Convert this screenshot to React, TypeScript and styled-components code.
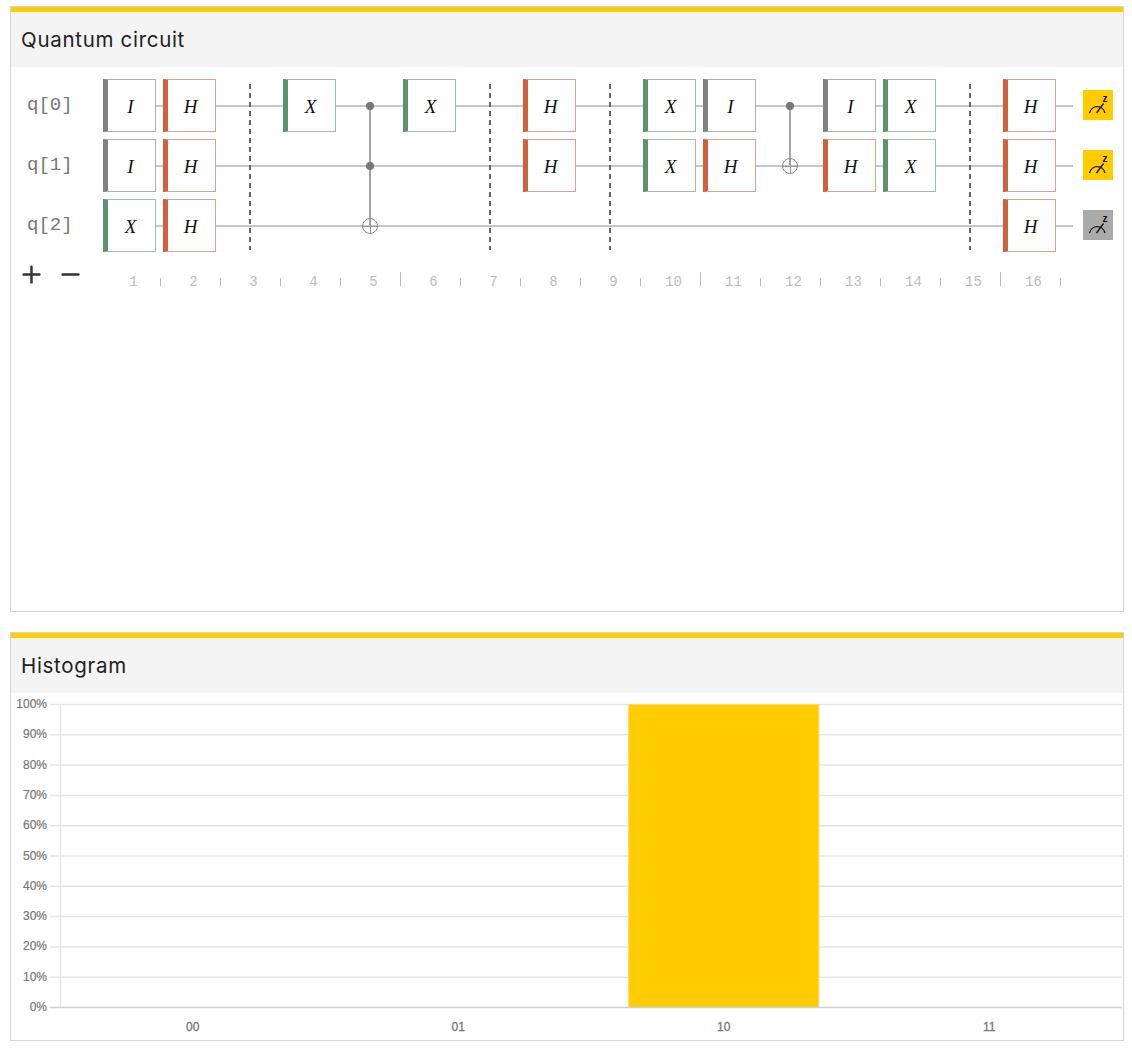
import React from 'react'
import styled, { createGlobalStyle } from 'styled-components'
import { Plus, Minus } from 'lucide-react'

const GlobalStyle = createGlobalStyle`
  html, body {
    margin: 0;
    padding: 0;
    background: #fff;
  }
`

const Page = styled.div`
  display: flex;
  flex-direction: column;
  gap: 20px;
  padding: 6px 8px 8px 10px;
  font-family: 'Liberation Sans', sans-serif;
`

const Card = styled.section<{ $height: number }>`
  display: flex;
  flex-direction: column;
  height: ${(p) => p.$height}px;
  box-sizing: border-box;
  border: 1px solid #d4d4d4;
  background: #fff;
`

const CardHeader = styled.h2`
  margin: 0;
  height: 55px;
  box-sizing: content-box;
  padding: 0 0 0 10px;
  display: flex;
  align-items: center;
  border-top: 5px solid #ffcc00;
  background: #f4f4f4;
  color: #222;
  font-family: 'Inter', sans-serif;
  font-size: 20.5px;
  line-height: 52px;
  font-weight: 400;
  letter-spacing: 0.7px;
`

const CircuitBody = styled.div`
  padding-top: 12px;
`

const QubitRow = styled.div`
  display: flex;
  height: 60px;
`

const QubitLabel = styled.div`
  width: 92px;
  height: 51px;
  box-sizing: border-box;
  padding-left: 16px;
  display: flex;
  align-items: center;
  font-family: 'Liberation Mono', monospace;
  font-size: 19px;
  color: #777;
`

const WireTrack = styled.div`
  position: relative;
  display: flex;
  width: 970px;

  &::before {
    content: '';
    position: absolute;
    left: 0;
    right: 0;
    top: 26px;
    height: 2px;
    background: #c6c6c6;
  }
`

const Cell = styled.div`
  position: relative;
  width: 60px;
  height: 53px;
  flex: none;
`

const gateColors = {
  I: { bar: '#808080', line: '#adadad' },
  H: { bar: '#d1603d', line: '#e0a08d' },
  X: { bar: '#5b9170', line: '#9fbfac' },
}

type GateName = keyof typeof gateColors

const Gate = styled.div<{ $gate: GateName }>`
  position: relative;
  width: 53px;
  height: 53px;
  box-sizing: border-box;
  padding: 2px 2px 0 0;
  display: flex;
  align-items: center;
  justify-content: center;
  background: #fff;
  border: 1px solid ${(p) => gateColors[p.$gate].line};
  border-left: 5px solid ${(p) => gateColors[p.$gate].bar};
  font-family: 'Liberation Serif', serif;
  font-style: italic;
  font-size: 19px;
  color: #111;
`

const Dot = styled.div`
  position: absolute;
  z-index: 2;
  left: 23px;
  top: 23px;
  width: 8px;
  height: 8px;
  border-radius: 50%;
  background: #777;
`

const Link = styled.div<{ $rows: number }>`
  position: absolute;
  z-index: 1;
  left: 26px;
  top: 26px;
  width: 2px;
  height: ${(p) => p.$rows * 60}px;
  background: #a4a4a4;
`

const Target = styled.div`
  position: absolute;
  z-index: 2;
  left: 19px;
  top: 19px;
  width: 16px;
  height: 16px;
  box-sizing: border-box;
  border: 1px solid #888;
  border-radius: 50%;
  background:
    linear-gradient(#999, #999) center / 100% 1px no-repeat,
    linear-gradient(#999, #999) center / 1px 100% no-repeat;
`

const Barrier = styled.div`
  position: absolute;
  z-index: 1;
  left: 26px;
  top: 5px;
  width: 2px;
  height: 166px;
  background: repeating-linear-gradient(to bottom, #666 0 5px, transparent 5px 9px);
`

const MeterBox = styled.div<{ $on: boolean }>`
  width: 30px;
  height: 30px;
  margin: 11px 0 0 10px;
  background: ${(p) => (p.$on ? '#ffcc00' : '#aaaaaa')};
`

const RulerRow = styled.div`
  display: flex;
  height: 31px;
`

const StepperGroup = styled.div`
  width: 90px;
  box-sizing: border-box;
  padding: 2px 0 0 7px;
  display: flex;
  align-items: flex-start;
  gap: 12px;
  color: #333;
`

const RulerCell = styled.div`
  width: 60px;
  height: 27px;
  flex: none;
  box-sizing: border-box;
  padding-left: 6px;
  display: flex;
  align-items: flex-end;
`

const StepNumber = styled.div`
  flex: 1;
  margin-bottom: -4px;
  text-align: center;
  font-family: 'Liberation Mono', monospace;
  font-size: 14px;
  line-height: 15px;
  color: #bbb;
`

const Tick = styled.div<{ $long: boolean }>`
  width: 1px;
  height: ${(p) => (p.$long ? 14 : 8)}px;
  background: #bbb;
`

const ChartSvg = styled.svg`
  display: block;
  font-family: 'Liberation Sans', sans-serif;
  font-size: 12px;
`

const circuit: string[][] = [
  ['I', 'H', '|', 'X', 'c2', 'X', '|', 'H', '|', 'X', 'I', 'c1', 'I', 'X', '|', 'H'],
  ['I', 'H', '', '', 'c', '', '', 'H', '', 'X', 'H', 't', 'H', 'X', '', 'H'],
  ['X', 'H', '', '', 't', '', '', '', '', '', '', '', '', '', '', 'H'],
]

const measured = [true, true, false]

const Meter = ({ on }: { on: boolean }) => (
  <MeterBox $on={on}>
    <svg width="30" height="30" viewBox="0 0 30 30">
      <path d="M6.5 23 A8 8.5 0 0 1 22 23" fill="none" stroke="#111" strokeWidth="1.3" />
      <path d="M13.5 23 L20.5 13.5" fill="none" stroke="#111" strokeWidth="1.3" />
      <text x="19.5" y="11.5" fontSize="10" fontWeight="bold" fontFamily="Liberation Sans, sans-serif" fill="#111">
        z
      </text>
    </svg>
  </MeterBox>
)

function CircuitCell({ value }: { value: string }) {
  if (value === 'I' || value === 'H' || value === 'X') {
    return (
      <Cell>
        <Gate $gate={value}>{value}</Gate>
      </Cell>
    )
  }
  return (
    <Cell>
      {value === '|' && <Barrier />}
      {value[0] === 'c' && <Dot />}
      {value.length > 1 && <Link $rows={Number(value[1])} />}
      {value === 't' && <Target />}
    </Cell>
  )
}

function QuantumCircuit() {
  return (
    <CircuitBody>
      {circuit.map((row, i) => (
        <QubitRow key={i}>
          <QubitLabel>q[{i}]</QubitLabel>
          <WireTrack>
            {row.map((value, col) => (
              <CircuitCell key={col} value={value} />
            ))}
          </WireTrack>
          <Meter on={measured[i]} />
        </QubitRow>
      ))}
      <RulerRow>
        <StepperGroup>
          <Plus size={27} strokeWidth={2.2} />
          <Minus size={27} strokeWidth={2.2} />
        </StepperGroup>
        {circuit[0].map((_, col) => (
          <RulerCell key={col}>
            <StepNumber>{col + 1}</StepNumber>
            <Tick $long={(col + 1) % 5 === 0} />
          </RulerCell>
        ))}
      </RulerRow>
    </CircuitBody>
  )
}

const histogram = [
  { label: '00', value: 0 },
  { label: '01', value: 0 },
  { label: '10', value: 100 },
  { label: '11', value: 0 },
]

function Histogram() {
  const left = 49
  const right = 1111
  const top = 11
  const bottom = 314
  const band = (right - left) / histogram.length
  const yFor = (v: number) => bottom - ((bottom - top) * v) / 100

  return (
    <ChartSvg width="1112" height="347" viewBox="0 0 1112 347">
      {Array.from({ length: 10 }, (_, i) => (i + 1) * 10).map((v) => (
        <line key={v} x1={39} x2={right} y1={yFor(v) + 0.5} y2={yFor(v) + 0.5} stroke="#e6e6e6" strokeWidth={1.5} />
      ))}
      <line x1={left + 0.5} x2={left + 0.5} y1={top} y2={bottom} stroke="#e6e6e6" strokeWidth={1.5} />
      {histogram.map((d, i) => (
        <rect
          key={d.label}
          x={left + i * band + band * 0.14 + 0.5}
          width={band * 0.72 - 1}
          y={yFor(d.value) + 0.5}
          height={bottom - yFor(d.value)}
          fill="#ffcc00"
          stroke="#ffdb66"
        />
      ))}
      <line x1={39} x2={right} y1={bottom + 0.5} y2={bottom + 0.5} stroke="#cfcfcf" strokeWidth={1.5} />
      {Array.from({ length: 11 }, (_, i) => i * 10).map((v) => (
        <text key={v} x={36} y={yFor(v) + 4} textAnchor="end" fill="#777" stroke="#777" strokeWidth={0.2}>
          {v}%
        </text>
      ))}
      {histogram.map((d, i) => (
        <text
          key={d.label}
          x={left + i * band + band / 2}
          y={338}
          textAnchor="middle"
          fill="#777"
          stroke="#777"
          strokeWidth={0.3}
        >
          {d.label}
        </text>
      ))}
    </ChartSvg>
  )
}

export default function App() {
  return (
    <Page>
      <GlobalStyle />
      <Card $height={606}>
        <CardHeader>Quantum circuit</CardHeader>
        <QuantumCircuit />
      </Card>
      <Card $height={409}>
        <CardHeader>Histogram</CardHeader>
        <Histogram />
      </Card>
    </Page>
  )
}
